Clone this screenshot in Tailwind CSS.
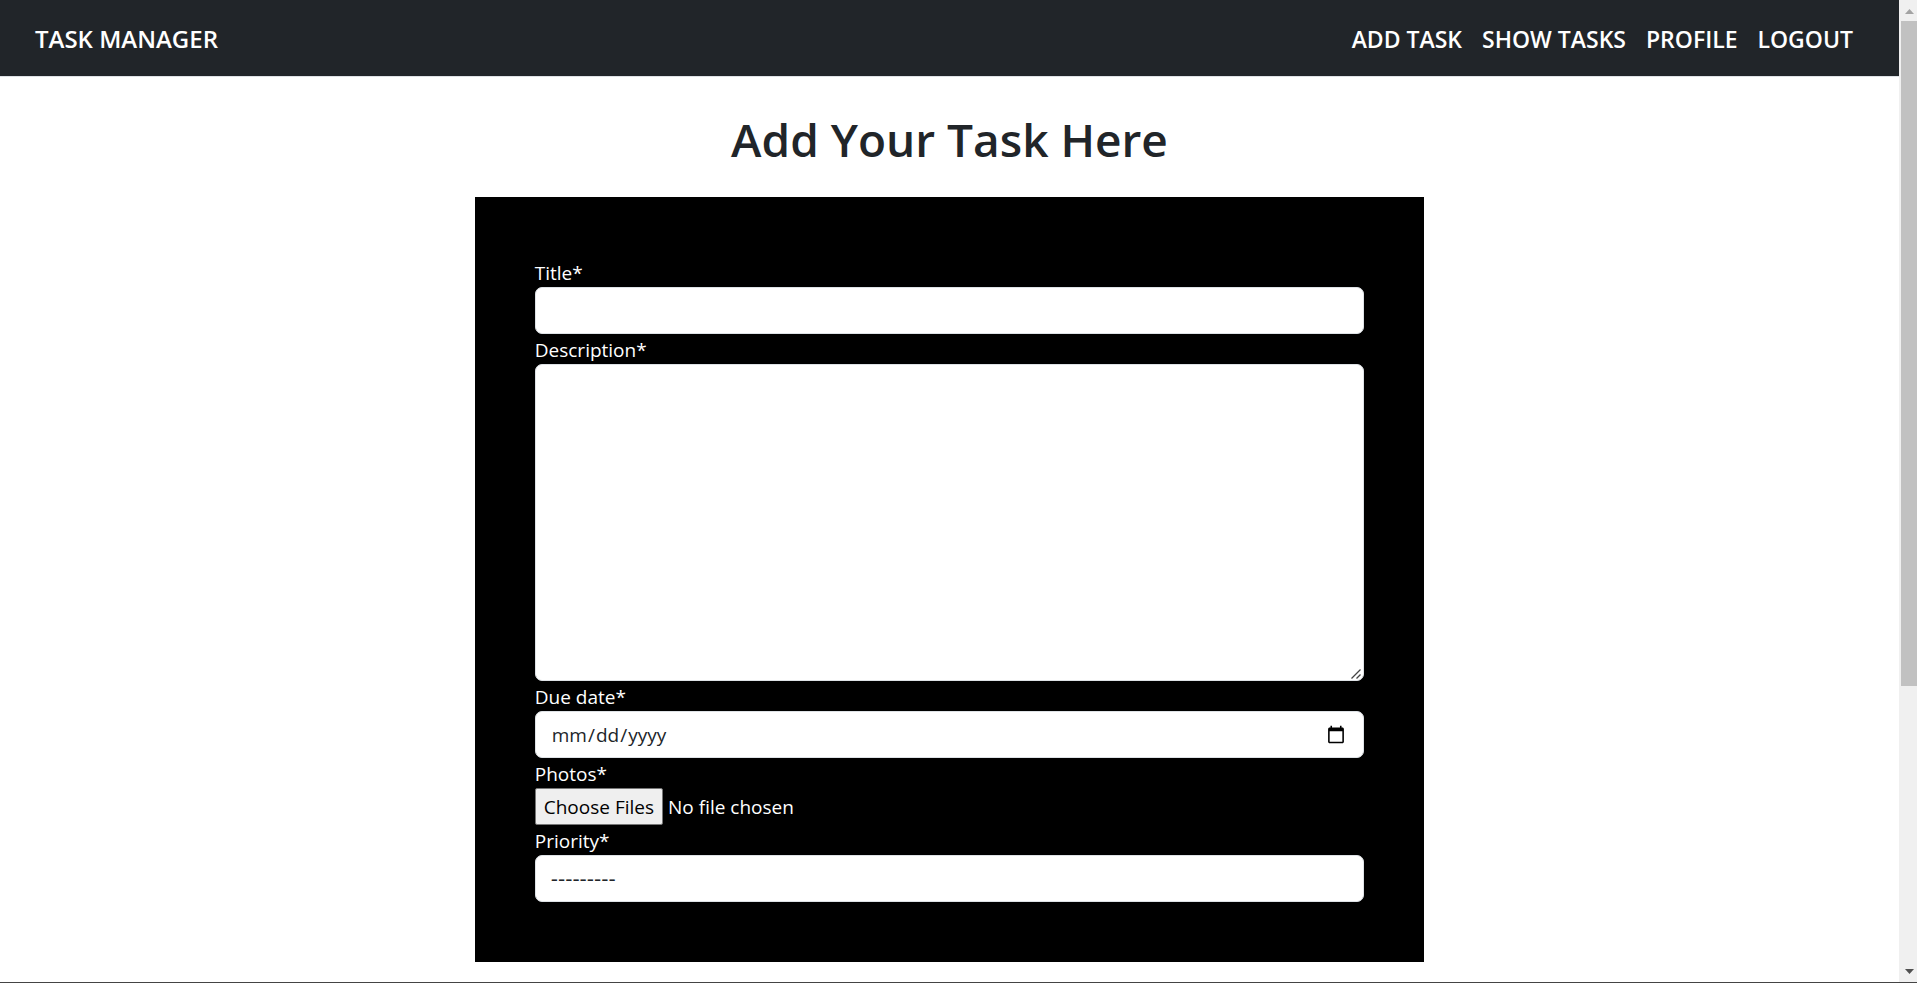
<!DOCTYPE html>
<html lang="en-US">
<head>
<meta charset="utf-8">
<meta name="viewport" content="width=device-width, initial-scale=1">
<title>Task Manager</title>
<script src="https://cdn.jsdelivr.net/npm/@tailwindcss/browser@4"></script>
</head>
<body class="flex min-h-screen flex-col bg-white font-['Segoe_UI','Open_Sans',sans-serif] text-[19px] leading-[30px] text-[#212529]">
<div class="flex grow border-b border-[#444444]">
  <div class="min-w-0 grow">
    <nav class="flex h-[77px] items-center justify-between border-b border-[#dee2e6] bg-[#212529] pt-0.5 pr-[46px] pl-[35px] font-semibold text-white">
      <a href="#" class="text-[24px]">TASK MANAGER</a>
      <div class="flex gap-5 text-[23px]">
        <a href="#">ADD TASK</a>
        <a href="#">SHOW TASKS</a>
        <a href="#">PROFILE</a>
        <a href="#">LOGOUT</a>
      </div>
    </nav>
    <main class="pt-8 pb-5">
      <h1 class="mb-7 text-center text-[46px] leading-[60px] font-semibold">Add Your Task Here</h1>
      <form class="mx-auto flex w-1/2 flex-col bg-black p-[60px] text-white">
        <label for="title" class="pt-0.5 leading-7">Title*</label>
        <input id="title" type="text" class="h-[47px] rounded-[7px] border border-[#dee2e6] bg-white px-[15px] text-[#212529]">
        <label for="description" class="pt-0.5 leading-7">Description*</label>
        <div class="relative flex">
          <textarea id="description" class="h-[317px] grow resize-y rounded-[7px] border border-[#dee2e6] bg-white px-[15px] py-2 text-[#212529] [&::-webkit-resizer]:hidden"></textarea>
          <svg class="pointer-events-none absolute right-[3px] bottom-[2px]" width="10" height="10" viewBox="0 0 10 10" fill="none" stroke="#444" stroke-width="1.300" aria-hidden="true"><path d="M.5 9.500L9.500.500M5.500 9.500L9.500 5.500"/></svg>
        </div>
        <label for="due" class="pt-0.5 leading-7">Due date*</label>
        <input id="due" type="date" class="h-[47px] rounded-[7px] border border-[#dee2e6] bg-white px-[15px] text-[#212529] [&::-webkit-calendar-picker-indicator]:size-5">
        <label for="photos" class="pt-0.5 leading-7">Photos*</label>
        <input id="photos" type="file" multiple class="h-[37px] file:mr-[5px] file:h-[37px] file:rounded-xs file:border file:border-[#767676] file:bg-[#efefef] file:px-2 file:text-black">
        <label for="priority" class="pt-0.5 leading-7">Priority*</label>
        <select id="priority" class="h-[47px] appearance-none rounded-[7px] border border-[#dee2e6] bg-white px-[15px] font-['DejaVu_Sans',sans-serif] text-xl text-[#212529]">
          <option>---------</option>
        </select>
      </form>
    </main>
  </div>
  <div class="flex w-[18px] shrink-0 flex-col bg-[#f0f0f0] pl-[2px]" aria-hidden="true">
    <div class="flex h-[21px] items-center justify-center">
      <svg class="mt-[2px]" width="9" height="5" viewBox="0 0 9 5"><path d="M0 5L4.500 0L9 5z" fill="#a3a3a3"/></svg>
    </div>
    <div class="grow-[665] bg-[#c1c1c1]"></div>
    <div class="grow-[275]"></div>
    <div class="flex h-[21px] items-center justify-center">
      <svg width="9" height="5" viewBox="0 0 9 5"><path d="M0 0L4.500 5L9 0z" fill="#505050"/></svg>
    </div>
  </div>
</div>
</body>
</html>
